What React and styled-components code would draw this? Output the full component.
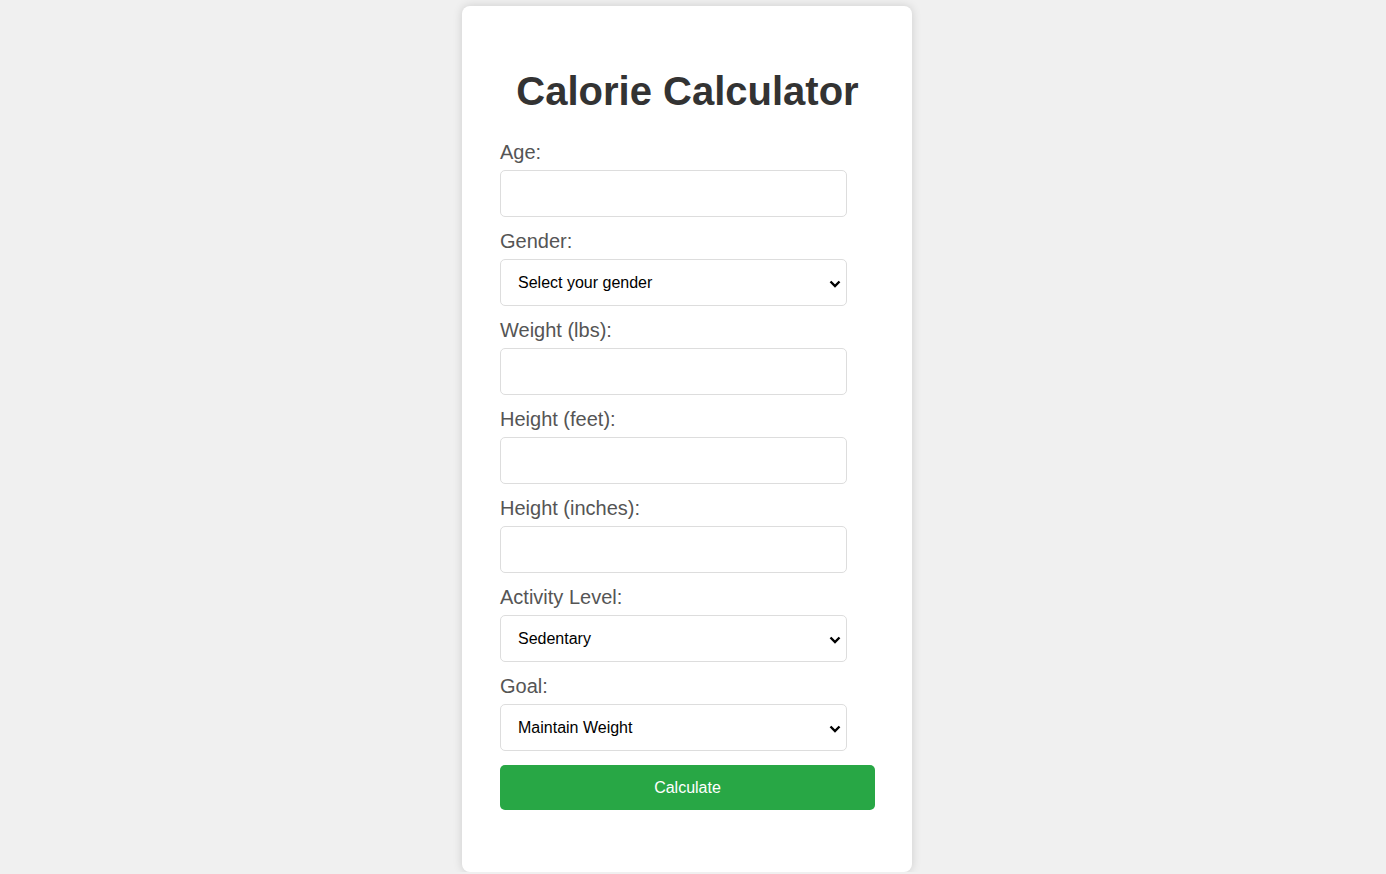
import React, { useState } from 'react';
import styled, { createGlobalStyle } from 'styled-components';

const GlobalStyle = createGlobalStyle`
    body {
        margin: 0;
        padding: 0;
        background-color: #f0f0f0;
        font-family: "Liberation Sans", Arial, sans-serif;
    }
`;

const Page = styled.div`
    display: flex;
    justify-content: center;
    padding: 6px 12px 0 0;
`;

const Card = styled.div`
    width: 450px;
    box-sizing: border-box;
    padding: 38px 37px 62px 38px;
    background-color: #fff;
    border-radius: 8px;
    box-shadow: 0 0 10px rgba(0, 0, 0, 0.15);
`;

const Title = styled.h1`
    margin: 24px 0;
    font-size: 40px;
    line-height: 46px;
    font-weight: bold;
    color: #333;
    text-align: center;
`;

const Group = styled.div`
    margin-bottom: 10px;
`;

const Label = styled.label`
    display: block;
    font-size: 20px;
    line-height: 23px;
    color: #555;
    padding-top: 3px;
    margin-bottom: 6px;
`;

const Input = styled.input`
    display: block;
    width: 347px;
    height: 47px;
    box-sizing: border-box;
    padding: 0 17px;
    border: 1px solid #ddd;
    border-radius: 5px;
    font-size: 16px;
    font-family: "Liberation Sans", Arial, sans-serif;
    background: #fff;
    outline: none;
`;

const SelectWrap = styled.div`
    position: relative;
    width: 347px;
`;

const Select = styled.select`
    display: block;
    width: 100%;
    height: 47px;
    box-sizing: border-box;
    padding: 0 30px 0 17px;
    border: 1px solid #ddd;
    border-radius: 5px;
    font-size: 16px;
    font-family: "Liberation Sans", Arial, sans-serif;
    color: #000;
    background: #fff;
    appearance: none;
    -webkit-appearance: none;
    outline: none;
`;

const Chevron = styled.svg`
    position: absolute;
    right: 6px;
    top: 50%;
    width: 12px;
    height: 8px;
    margin-top: -3px;
    pointer-events: none;
`;

const Button = styled.button`
    display: block;
    width: 100%;
    height: 45px;
    margin-top: 14px;
    border: none;
    border-radius: 5px;
    background-color: #28a745;
    color: #fff;
    font-size: 16px;
    font-family: "Liberation Sans", Arial, sans-serif;
    cursor: pointer;
`;

function Dropdown({ value, onChange, children }) {
    return (
        <SelectWrap>
            <Select value={value} onChange={onChange}>
                {children}
            </Select>
            <Chevron viewBox="0 0 12 8">
                <polyline points="1.5,1.5 6,6 10.5,1.5" fill="none" stroke="#000" strokeWidth="2.4" />
            </Chevron>
        </SelectWrap>
    );
}

function App() {
    const [form, setForm] = useState({
        age: '',
        gender: '',
        weight: '',
        feet: '',
        inches: '',
        activity: 'sedentary',
        goal: 'maintain',
    });

    const update = (key) => (e) => setForm({ ...form, [key]: e.target.value });

    return (
        <Page>
            <GlobalStyle />
            <Card>
                <Title>Calorie Calculator</Title>
                <Group>
                    <Label>Age:</Label>
                    <Input type="number" value={form.age} onChange={update('age')} />
                </Group>
                <Group>
                    <Label>Gender:</Label>
                    <Dropdown value={form.gender} onChange={update('gender')}>
                        <option value="">Select your gender</option>
                        <option value="male">Male</option>
                        <option value="female">Female</option>
                    </Dropdown>
                </Group>
                <Group>
                    <Label>Weight (lbs):</Label>
                    <Input type="number" value={form.weight} onChange={update('weight')} />
                </Group>
                <Group>
                    <Label>Height (feet):</Label>
                    <Input type="number" value={form.feet} onChange={update('feet')} />
                </Group>
                <Group>
                    <Label>Height (inches):</Label>
                    <Input type="number" value={form.inches} onChange={update('inches')} />
                </Group>
                <Group>
                    <Label>Activity Level:</Label>
                    <Dropdown value={form.activity} onChange={update('activity')}>
                        <option value="sedentary">Sedentary</option>
                        <option value="light">Lightly Active</option>
                        <option value="moderate">Moderately Active</option>
                        <option value="very">Very Active</option>
                    </Dropdown>
                </Group>
                <Group>
                    <Label>Goal:</Label>
                    <Dropdown value={form.goal} onChange={update('goal')}>
                        <option value="lose">Lose Weight</option>
                        <option value="maintain">Maintain Weight</option>
                        <option value="gain">Gain Weight</option>
                    </Dropdown>
                </Group>
                <Button>Calculate</Button>
            </Card>
        </Page>
    );
}

export default App;
